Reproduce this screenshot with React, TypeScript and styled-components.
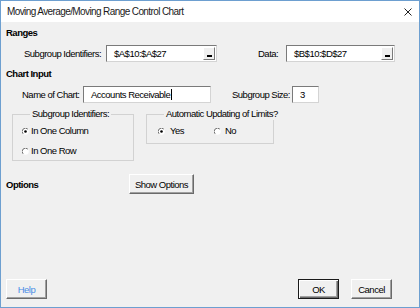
import React from "react";
import styled, { createGlobalStyle } from "styled-components";

const Global = createGlobalStyle`
  html, body { margin: 0; padding: 0; background: #f0f0f0; }
  * { box-sizing: border-box; }
`;

const FONT = `"Liberation Sans", Arial, sans-serif`;

const Window = styled.div`
  width: 420px;
  height: 308px;
  border: 1px solid #6d9fd0;
  display: flex;
  flex-direction: column;
  font-family: ${FONT};
  font-size: 9.5px;
  letter-spacing: -0.5px;
  color: #000;
  background: #f0f0f0;
`;

const TitleBar = styled.div`
  height: 21px;
  background: #fff;
  display: flex;
  align-items: center;
  justify-content: space-between;
  padding: 0 7px 0 6px;
  font-size: 10px;
  letter-spacing: -0.6px;
  color: #1a1a1a;
`;

const Body = styled.div`
  flex: 1;
  display: flex;
  flex-direction: column;
  padding: 0 5px 8px 5px;
`;

const Heading = styled.div<{ $mt: number }>`
  font-weight: bold;
  line-height: 12px;
  margin-top: ${(p) => p.$mt}px;
`;

const Row = styled.div<{ $mt: number; $ml: number }>`
  display: flex;
  align-items: center;
  margin-top: ${(p) => p.$mt}px;
  margin-left: ${(p) => p.$ml}px;
  height: 17px;
`;

const Label = styled.span<{ $w: number; $ml?: number }>`
  width: ${(p) => p.$w}px;
  margin-left: ${(p) => p.$ml ?? 0}px;
  flex: none;
  white-space: nowrap;
`;

const Field = styled.div<{ $w: number }>`
  width: ${(p) => p.$w}px;
  height: 17px;
  flex: none;
  background: #fff;
  border: 1px solid;
  border-color: #7a7a7a #d4d4d4 #d4d4d4 #7a7a7a;
  display: flex;
  align-items: center;
  padding-left: 7px;
  padding-right: 1px;
  white-space: nowrap;
`;

const FieldText = styled.span`
  flex: 1;
`;

const Caret = styled.span`
  display: inline-block;
  width: 1px;
  height: 11px;
  background: #000;
  vertical-align: middle;
  margin-left: 1px;
`;

const PickButton = styled.div`
  width: 12px;
  height: 13px;
  flex: none;
  background: #f0f0f0;
  border: 1px solid;
  border-color: #fff #7a7a7a #7a7a7a #fff;
  display: flex;
  align-items: flex-end;
  justify-content: center;
  padding-bottom: 2px;
  &::after {
    content: "";
    width: 5px;
    height: 2px;
    background: #000;
  }
`;

const GroupRow = styled.div`
  display: flex;
  align-items: flex-start;
  gap: 12px;
  margin-top: 5px;
  margin-left: 6px;
`;

const Group = styled.fieldset<{ $w: number; $h: number }>`
  width: ${(p) => p.$w}px;
  height: ${(p) => p.$h}px;
  margin: 0;
  padding: 5px 0 0 9px;
  border: 1px solid #d2d2d2;
  display: flex;
  flex-direction: column;
  gap: 8px;
  min-width: 0;
`;

const Legend = styled.legend`
  padding: 0 2px;
  margin-left: 8px;
  line-height: 12px;
  white-space: nowrap;
`;

const RadioLine = styled.div`
  display: flex;
  gap: 30px;
  height: 12px;
  align-items: center;
  margin-left: 2px;
`;

const RadioItem = styled.label<{ $gap?: number }>`
  display: flex;
  align-items: center;
  gap: ${(p) => p.$gap ?? 2}px;
  line-height: 12px;
`;

const OptionsRow = styled.div`
  display: flex;
  align-items: center;
  margin-top: 13px;
`;

const OptionsLabel = styled.span`
  font-weight: bold;
  width: 123px;
  flex: none;
`;

const Btn = styled.button<{ $w: number; $default?: boolean; $blue?: boolean }>`
  width: ${(p) => p.$w}px;
  height: 20px;
  padding: 0;
  font-family: ${FONT};
  font-size: 9.5px;
  letter-spacing: -0.5px;
  color: ${(p) => (p.$blue ? "#4a8de6" : "#000")};
  background: #f0f0f0;
  border: 1px solid;
  border-color: ${(p) => (p.$default ? "#1a1a1a" : "#fff #6a6a6a #6a6a6a #fff")};
  box-shadow: ${(p) =>
    p.$default
      ? "inset 1px 1px 0 #fff, inset -1px -1px 0 #6a6a6a, inset -2px -2px 0 #a0a0a0"
      : "inset -1px -1px 0 #a0a0a0"};
`;

const Footer = styled.div`
  margin-top: auto;
  display: flex;
  justify-content: space-between;
  align-items: center;
`;

const FooterRight = styled.div`
  display: flex;
  gap: 12px;
  margin-right: 22px;
`;

function Radio({ checked }: { checked?: boolean }) {
  return (
    <svg width="7" height="7" viewBox="0 0 7 7">
      <circle cx="3.5" cy="3.5" r="3.2" fill="#fff" />
      <path d="M1.1 5.8 A3.2 3.2 0 0 1 5.8 1.1" fill="none" stroke="#6a6a6a" strokeWidth="1" />
      {checked && <circle cx="3.5" cy="3.5" r="1.3" fill="#000" />}
    </svg>
  );
}

function CloseIcon() {
  return (
    <svg width="8" height="8" viewBox="0 0 8 8">
      <path d="M0.5 0.5 L7.5 7.5 M7.5 0.5 L0.5 7.5" stroke="#222" strokeWidth="1" />
    </svg>
  );
}

export default function App() {
  return (
    <>
      <Global />
      <Window>
        <TitleBar>
          <span>Moving Average/Moving Range Control Chart</span>
          <CloseIcon />
        </TitleBar>
        <Body>
          <Heading $mt={5}>Ranges</Heading>
          <Row $mt={6} $ml={18}>
            <Label $w={82}>Subgroup Identifiers:</Label>
            <Field $w={111}>
              <FieldText>$A$10:$A$27</FieldText>
              <PickButton />
            </Field>
            <Label $w={28} $ml={41}>Data:</Label>
            <Field $w={109}>
              <FieldText>$B$10:$D$27</FieldText>
              <PickButton />
            </Field>
          </Row>
          <Heading $mt={6}>Chart Input</Heading>
          <Row $mt={6} $ml={16}>
            <Label $w={61}>Name of Chart:</Label>
            <Field $w={128}>
              <FieldText>
                Accounts Receivable
                <Caret />
              </FieldText>
            </Field>
            <Label $w={60} $ml={21}>Subgroup Size:</Label>
            <Field $w={27}>
              <FieldText>3</FieldText>
            </Field>
          </Row>
          <GroupRow>
            <Group $w={122} $h={53}>
              <Legend>Subgroup Identifiers:</Legend>
              <RadioItem>
                <Radio checked />
                In One Column
              </RadioItem>
              <RadioItem>
                <Radio />
                In One Row
              </RadioItem>
            </Group>
            <Group $w={128} $h={36}>
              <Legend>Automatic Updating of Limits?</Legend>
              <RadioLine>
                <RadioItem $gap={5}>
                  <Radio checked />
                  Yes
                </RadioItem>
                <RadioItem $gap={4}>
                  <Radio />
                  No
                </RadioItem>
              </RadioLine>
            </Group>
          </GroupRow>
          <OptionsRow>
            <OptionsLabel>Options</OptionsLabel>
            <Btn $w={65}>Show Options</Btn>
          </OptionsRow>
          <Footer>
            <Btn $w={41} $blue>
              Help
            </Btn>
            <FooterRight>
              <Btn $w={41} $default>
                OK
              </Btn>
              <Btn $w={41}>Cancel</Btn>
            </FooterRight>
          </Footer>
        </Body>
      </Window>
    </>
  );
}
